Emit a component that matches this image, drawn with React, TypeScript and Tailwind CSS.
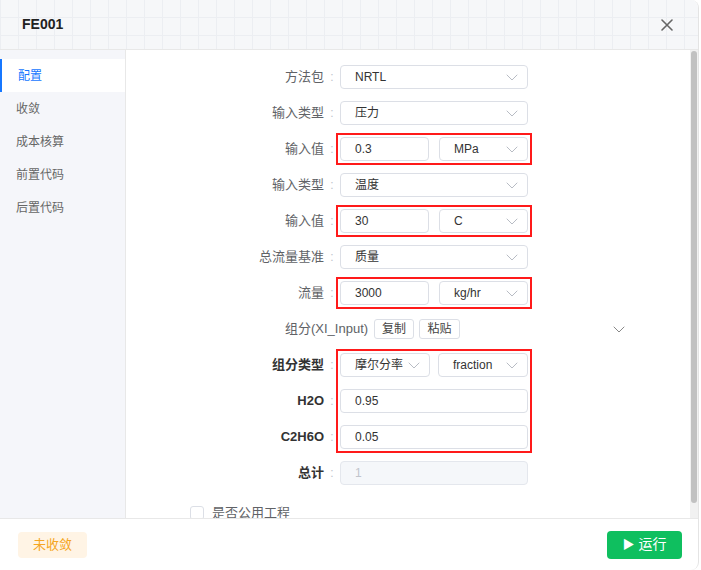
import React from 'react';

const font = { fontFamily: '"Liberation Sans", "Noto Sans CJK SC", sans-serif' };

const Chevron: React.FC<{ className?: string }> = ({ className }) => (
    <svg viewBox="0 0 12 7" className={className} fill="none" stroke="currentColor" strokeWidth="1" strokeLinecap="round" strokeLinejoin="round">
        <path d="M1 1l5 5 5-5" />
    </svg>
);

const Select: React.FC<{ value: string; w: string }> = ({ value, w }) => (
    <div className={`${w} h-[24px] border border-[#dcdfe6] rounded-[4px] bg-white flex items-center justify-between pl-[14px] pr-[9px] text-[12px] text-[#333]`}>
        <span>{value}</span>
        <Chevron className="w-[12px] h-[7px] text-[#b8bcc4]" />
    </div>
);

const Input: React.FC<{ value: string; w: string; disabled?: boolean }> = ({ value, w, disabled }) => (
    <div className={`${w} h-[24px] border rounded-[4px] flex items-center pl-[14px] text-[12px] ${disabled ? 'bg-[#f5f7fa] border-[#e4e7ed] text-[#c0c4cc]' : 'bg-white border-[#dcdfe6] text-[#333]'}`}>
        {value}
    </div>
);

const Label: React.FC<{ text: string; bold?: boolean }> = ({ text, bold }) => (
    <>
        <div className={`w-[198px] text-right text-[13px] ${bold ? 'font-bold text-[#333]' : 'text-[#606266]'}`}>{text}</div>
        <div className="w-[16px] text-center text-[12px] text-[#c0c4cc]">:</div>
    </>
);

const Row: React.FC<{ label: string; bold?: boolean; children: React.ReactNode }> = ({ label, bold, children }) => (
    <div className="h-[36px] flex items-center">
        <Label text={label} bold={bold} />
        {children}
    </div>
);

// red highlight box round a field pair
const Pair: React.FC<{ a: React.ReactNode; b: React.ReactNode }> = ({ a, b }) => (
    <div className="flex gap-[10px] outline-2 outline-[#ff1a1a] outline-offset-2">
        {a}
        {b}
    </div>
);

const menu = ['配置', '收敛', '成本核算', '前置代码', '后置代码'];

const App: React.FC = () => {
    return (
        <div className="w-[701px] h-[570px] bg-white" style={font}>
            <div className="w-[699px] h-[570px] flex flex-col bg-white border-r border-[#e4e4e4] rounded-r-[8px] overflow-hidden">
                <header className="h-[50px] shrink-0 flex items-center justify-between pl-[22px] pr-[25px] border-b border-[#e8e8e8] bg-[#f6f7f9] bg-[linear-gradient(to_right,#eceef2_1px,transparent_1px),linear-gradient(to_bottom,#eceef2_1px,transparent_1px)] bg-[size:18px_18px] bg-[position:0px_-1px]">
                    <h1 className="text-[14px] font-bold text-[#222]">FE001</h1>
                    <svg viewBox="0 0 12 12" className="w-[12px] h-[12px] text-[#666]" fill="none" stroke="currentColor" strokeWidth="1.6" strokeLinecap="round">
                        <path d="M1 1l10 10M11 1L1 11" />
                    </svg>
                </header>

                <div className="flex h-[468px] shrink-0">
                    <aside className="w-[126px] shrink-0 bg-[#f5f6fa] border-r border-[#e8e8e8] pt-[9px]">
                        {menu.map((m, i) => (
                            <div
                                key={m}
                                className={`h-[33px] flex items-center pl-[16px] text-[12px] ${i === 0 ? 'bg-white text-[#1677ff] border-l-2 border-[#1677ff] pl-[14px]' : 'text-[#666]'}`}
                            >
                                {m}
                            </div>
                        ))}
                    </aside>

                    <main className="flex-1 overflow-hidden pt-[9px]">
                        <Row label="方法包"><Select value="NRTL" w="w-[188px]" /></Row>
                        <Row label="输入类型"><Select value="压力" w="w-[188px]" /></Row>
                        <Row label="输入值">
                            <Pair a={<Input value="0.3" w="w-[89px]" />} b={<Select value="MPa" w="w-[89px]" />} />
                        </Row>
                        <Row label="输入类型"><Select value="温度" w="w-[188px]" /></Row>
                        <Row label="输入值">
                            <Pair a={<Input value="30" w="w-[89px]" />} b={<Select value="C" w="w-[89px]" />} />
                        </Row>
                        <Row label="总流量基准"><Select value="质量" w="w-[188px]" /></Row>
                        <Row label="流量">
                            <Pair a={<Input value="3000" w="w-[89px]" />} b={<Select value="kg/hr" w="w-[89px]" />} />
                        </Row>

                        <div className="h-[36px] flex items-center pl-[159px]">
                            <span className="text-[13px] text-[#606266]">组分(XI_Input)</span>
                            <button className="ml-[6px] w-[40px] h-[20px] border border-[#dcdfe6] rounded-[3px] text-[12px] text-[#444] bg-white">复制</button>
                            <button className="ml-[5px] w-[41px] h-[20px] border border-[#dcdfe6] rounded-[3px] text-[12px] text-[#444] bg-white">粘贴</button>
                            <Chevron className="ml-[153px] w-[12px] h-[7px] text-[#888]" />
                        </div>

                        <div className="flex py-[6px]">
                            <div className="flex flex-col gap-[12px]">
                                {['组分类型', 'H2O', 'C2H6O'].map(l => (
                                    <div key={l} className="h-[24px] flex items-center"><Label text={l} bold /></div>
                                ))}
                            </div>
                            <div className="flex flex-col gap-[12px] outline-2 outline-[#ff1a1a] outline-offset-2">
                                <div className="flex gap-[8px]">
                                    <Select value="摩尔分率" w="w-[90px]" />
                                    <Select value="fraction" w="w-[90px]" />
                                </div>
                                <Input value="0.95" w="w-[188px]" />
                                <Input value="0.05" w="w-[188px]" />
                            </div>
                        </div>

                        <Row label="总计" bold><Input value="1" w="w-[188px]" disabled /></Row>

                        <div className="h-[36px] flex items-center pl-[64px] mt-[4px]">
                            <div className="w-[14px] h-[14px] border border-[#dcdfe6] rounded-[3px] bg-white" />
                            <span className="ml-[8px] text-[13px] text-[#606266]">是否公用工程</span>
                        </div>
                    </main>

                    <div className="w-[8px] shrink-0 bg-[#f1f1f1] pt-[1px]">
                        <div className="w-[6px] ml-[1px] h-[452px] rounded-full bg-[#c1c1c1]" />
                    </div>
                </div>

                <footer className="flex-1 border-t border-[#e8e8e8] flex items-center justify-between pl-[18px] pr-[16px]">
                    <span className="w-[69px] h-[26px] flex items-center justify-center rounded-[4px] bg-[#fff4e5] text-[13px] text-[#f5a623]">未收敛</span>
                    <button className="w-[75px] h-[28px] flex items-center justify-center gap-[4px] rounded-[4px] bg-[#0fbf5f] text-white text-[14px]">
                        <span className="text-[12px]">▶</span>
                        <span>运行</span>
                    </button>
                </footer>
            </div>
        </div>
    );
};

export default App;
